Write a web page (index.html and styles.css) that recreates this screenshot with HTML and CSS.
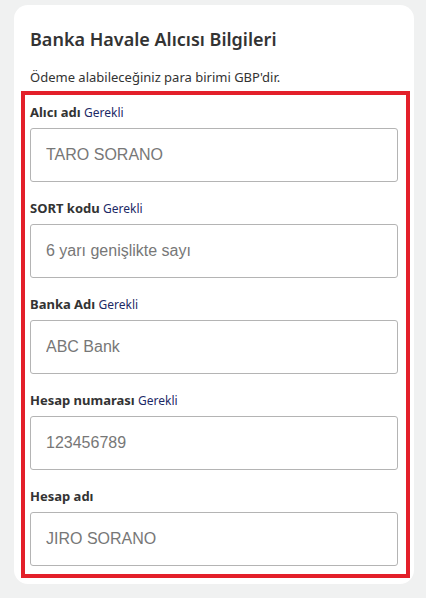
FILE: index.html
```html
<!DOCTYPE html>
<html lang="tr">
<head>
<meta charset="utf-8">
<title>Banka Havale Alıcısı Bilgileri</title>
<link rel="stylesheet" href="styles.css">
</head>
<body>
<div class="card">
  <h2 class="title">Banka Havale Alıcısı Bilgileri</h2>
  <p class="note">Ödeme alabileceğiniz para birimi GBP'dir.</p>
  <div class="highlight">
    <div class="field">
      <label class="label">Alıcı adı <span class="req">Gerekli</span></label>
      <input class="input" type="text" placeholder="TARO SORANO">
    </div>
    <div class="field">
      <label class="label">SORT kodu <span class="req">Gerekli</span></label>
      <input class="input" type="text" placeholder="6 yarı genişlikte sayı">
    </div>
    <div class="field">
      <label class="label">Banka Adı <span class="req">Gerekli</span></label>
      <input class="input" type="text" placeholder="ABC Bank">
    </div>
    <div class="field">
      <label class="label">Hesap numarası <span class="req">Gerekli</span></label>
      <input class="input" type="text" placeholder="123456789">
    </div>
    <div class="field">
      <label class="label">Hesap adı</label>
      <input class="input" type="text" placeholder="JIRO SORANO">
    </div>
  </div>
</div>
</body>
</html>
```
FILE: styles.css
```css
html, body {
  margin: 0;
  padding: 0;
  background: #f0f1f1;
}
body {
  font-family: "Noto Sans", "Open Sans", sans-serif;
  color: #333;
  padding: 5px 12px 15px 14px;
}
.card {
  width: 368px;
  background: #fff;
  border-radius: 14px;
  padding: 21px 16px 6px 16px;
}
.title {
  margin: 0;
  font-size: 18px;
  font-weight: 600;
  line-height: 26px;
  color: #333;
}
.note {
  margin: 16px 0 0 0;
  font-size: 13px;
  line-height: 18px;
}
.highlight {
  margin: 5px -12px 0 -9px;
  border: 4px solid #e3202a;
  padding: 8px 8px 8px 5px;
}
.field {
  display: flex;
  flex-direction: column;
  gap: 7px;
  margin-bottom: 17px;
}
.field:last-child {
  margin-bottom: 0;
}
.label {
  display: block;
  height: 18px;
  font-size: 13px;
  line-height: 18px;
  font-weight: 700;
  color: #333;
}
.req {
  font-size: 12px;
  line-height: 12px;
  font-weight: 400;
  color: #1c2a66;
}
.input {
  box-sizing: border-box;
  width: 100%;
  height: 54px;
  margin: 0;
  border: 1px solid #b4b4b4;
  border-radius: 3px;
  padding: 0 15px;
  font-family: "Liberation Sans", Arial, sans-serif;
  font-size: 16px;
  color: #333;
  background: #fff;
}
.input::placeholder {
  color: #777;
}
```
